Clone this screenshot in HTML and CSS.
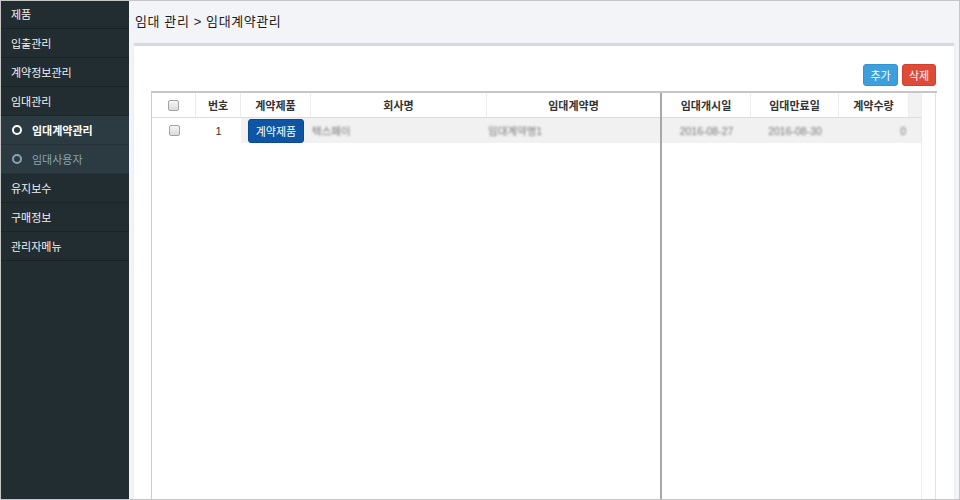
FILE: index.html
```html
<!DOCTYPE html>
<html lang="ko">
<head>
    <meta charset="UTF-8">
    <title>임대계약관리</title>
    <link rel="stylesheet" href="styles.css">
</head>
<body>
    <div class="frame">
        <div class="sidebar">
            <div class="menu-item first">제품</div>
            <div class="menu-item">입출관리</div>
            <div class="menu-item">계약정보관리</div>
            <div class="menu-item">임대관리</div>
            <div class="menu-item sub active"><span class="ring"></span>임대계약관리</div>
            <div class="menu-item sub"><span class="ring"></span>임대사용자</div>
            <div class="menu-item">유지보수</div>
            <div class="menu-item">구매정보</div>
            <div class="menu-item">관리자메뉴</div>
        </div>

        <div class="main">
            <div class="breadcrumb">임대 관리 &gt; 임대계약관리</div>

            <div class="panel">
                <div class="toolbar">
                    <button class="btn btn-add">추가</button>
                    <button class="btn btn-del">삭제</button>
                </div>

                <div class="grid">
                    <div class="part left">
                        <div class="row head">
                            <div class="cell c-chk"><span class="chk"></span></div>
                            <div class="cell c-no">번호</div>
                            <div class="cell c-prod">계약제품</div>
                            <div class="cell c-comp">회사명</div>
                            <div class="cell c-name">임대계약명</div>
                        </div>
                        <div class="row body">
                            <div class="cell c-chk white"><span class="chk"></span></div>
                            <div class="cell c-no white">1</div>
                            <div class="cell c-prod"><button class="btn-prod">계약제품</button></div>
                            <div class="cell c-comp txt-left"><span class="blur">텍스페이</span></div>
                            <div class="cell c-name txt-left"><span class="blur">임대계약명1</span></div>
                        </div>
                    </div>
                    <div class="divider"></div>
                    <div class="part right">
                        <div class="row head">
                            <div class="cell c-date">임대개시일</div>
                            <div class="cell c-date2">임대만료일</div>
                            <div class="cell c-qty">계약수량</div>
                            <div class="cell c-fill"></div>
                        </div>
                        <div class="row body">
                            <div class="cell c-date"><span class="blur">2016-08-27</span></div>
                            <div class="cell c-date2"><span class="blur">2016-08-30</span></div>
                            <div class="cell c-qty txt-right"><span class="blur">0</span></div>
                            <div class="cell c-fill"></div>
                        </div>
                    </div>
                    <div class="scroll"></div>
                </div>
            </div>
        </div>
    </div>
</body>
</html>
```

FILE: styles.css
```css
* {
    box-sizing: border-box;
}
body {
    margin: 0;
    font-family: 'Liberation Sans', 'Noto Sans CJK KR', sans-serif;
    font-size: 11px;
    color: #333;
}
.frame {
    width: 960px;
    height: 500px;
    border: 1px solid #c6c6c6;
    display: flex;
    overflow: hidden;
}

/* sidebar */
.sidebar {
    width: 128px;
    background-color: #222d32;
    flex-shrink: 0;
}
.menu-item {
    height: 29px;
    border-bottom: 1px solid #1a2226;
    color: #f2f2f2;
    padding-left: 10px;
    padding-bottom: 1px;
    display: flex;
    align-items: center;
}
.menu-item.first {
    height: 28px;
}
.menu-item.sub {
    background-color: #2c3b41;
    border-bottom-color: #253136;
    color: #8aa4af;
    padding-left: 11px;
}
.menu-item.sub.active {
    color: #fff;
    font-weight: bold;
}
.ring {
    width: 10px;
    height: 10px;
    border: 2px solid #8aa4af;
    border-radius: 50%;
    margin-right: 10px;
}
.active .ring {
    border-color: #fff;
}

/* main */
.main {
    flex: 1;
    background-color: #f2f4f7;
    padding: 0 5px 0 5px;
    display: flex;
    flex-direction: column;
}
.breadcrumb {
    height: 42px;
    display: flex;
    align-items: center;
    padding-left: 1px;
    padding-bottom: 4px;
    font-size: 13px;
    color: #1a1a1a;
    letter-spacing: 0.6px;
}
.panel {
    flex: 1;
    background-color: #fff;
    border-top: 3px solid #d5d9e0;
    box-shadow: 0 1px 2px rgba(0,0,0,0.08);
    padding: 18px 17px 0 17px;
    display: flex;
    flex-direction: column;
}
.toolbar {
    display: flex;
    justify-content: flex-end;
    gap: 4px;
    margin-bottom: 5px;
    padding-right: 1px;
}
.btn {
    height: 22px;
    width: 35px;
    border: 1px solid transparent;
    border-radius: 3px;
    color: #fff;
    font-family: inherit;
    font-size: 11px;
    padding: 0;
    cursor: pointer;
}
.btn-add {
    background-color: #3ca0dc;
    border-color: #3594cf;
}
.btn-del {
    background-color: #dd4b39;
    border-color: #d43f2d;
    width: 34px;
}

/* grid */
.grid {
    flex: 1;
    display: flex;
    border-top: 2px solid #c6c6c6;
}
.part {
    display: flex;
    flex-direction: column;
}
.part.left {
    width: 509px;
    border-left: 1px solid #cbcbcb;
}
.part.right {
    width: 259px;
}
.divider {
    width: 2px;
    background-color: #a8a8a8;
}
.scroll {
    width: 15px;
    border-left: 1px solid #ececec;
    border-right: 1px solid #e2e2e2;
}
.row {
    display: flex;
}
.row.head {
    height: 25px;
    border-bottom: 1px solid #dcdcdc;
    font-weight: bold;
    color: #333;
}
.row.head .cell {
    border-right: 1px solid #ededed;
}
.row.body {
    height: 25px;
    background-color: #f1f1f1;
}
.cell {
    display: flex;
    align-items: center;
    justify-content: center;
    flex-shrink: 0;
}
.cell.white {
    background-color: #fff;
}
.txt-left {
    justify-content: flex-start;
    padding-left: 1px;
}
.txt-right {
    justify-content: flex-end;
    padding-right: 3px;
}
.c-chk { width: 44px; }
.c-no { width: 45px; }
.c-prod { width: 70px; }
.c-comp { width: 176px; }
.c-name { width: 173px; }
.c-date { width: 89px; }
.c-date2 { width: 88px; }
.c-qty { width: 70px; }
.c-fill { width: 12px; }
.row.head .c-fill {
    background-color: #f2f2f2;
    border-right: none;
}
.row.head .c-name {
    border-right: none;
}

.chk {
    width: 11px;
    height: 11px;
    border: 1px solid #a3a3a3;
    border-radius: 2px;
    background: linear-gradient(#f5f5f5, #dadada);
}
.btn-prod {
    height: 24px;
    width: 56px;
    background-color: #0e56a5;
    border: 1px solid #0b4a8f;
    border-radius: 3px;
    color: #fff;
    font-family: inherit;
    font-size: 11px;
    padding: 0;
}
.blur {
    color: #777;
    filter: blur(1.1px);
    font-size: 10.5px;
}
```
